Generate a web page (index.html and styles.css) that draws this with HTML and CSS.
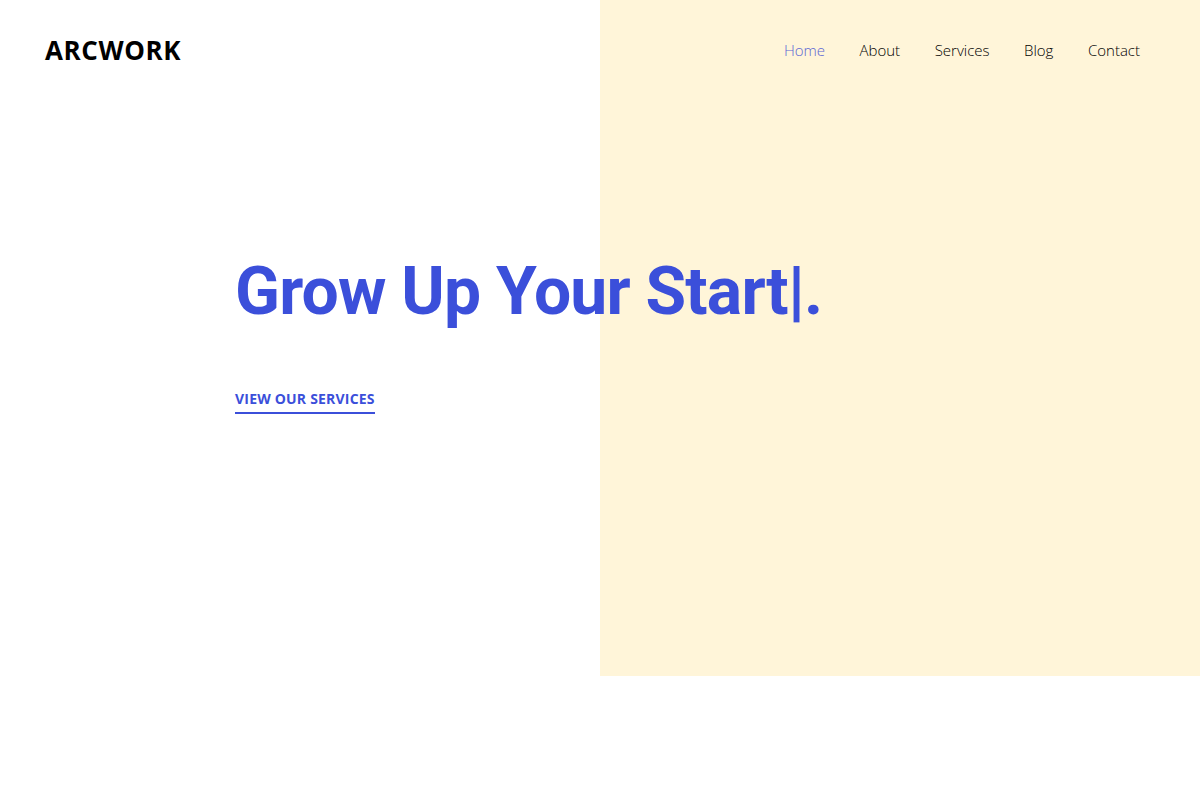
FILE: index.html
```html
<!DOCTYPE html>
<html lang="en">
<head>
<meta charset="utf-8">
<title>Arcwork</title>
<link rel="stylesheet" href="styles.css">
</head>
<body>
<div class="page">
  <header class="header">
    <div class="logo">ARCWORK</div>
    <nav class="nav">
      <a class="nav-link active" href="#">Home</a>
      <a class="nav-link" href="#">About</a>
      <a class="nav-link" href="#">Services</a>
      <a class="nav-link" href="#">Blog</a>
      <a class="nav-link" href="#">Contact</a>
    </nav>
  </header>
  <section class="hero">
    <h1 class="title">Grow Up Your Start<span class="cursor">|</span>.</h1>
    <a class="cta" href="#">VIEW OUR SERVICES</a>
  </section>
</div>
</body>
</html>
```

FILE: styles.css
```css
html, body {
  margin: 0;
  padding: 0;
  background: #ffffff;
}
.page {
  height: 676px;
  background: linear-gradient(to right, #ffffff 0, #ffffff 600px, #fff5d9 600px, #fff5d9 100%);
  display: flex;
  flex-direction: column;
}
.header {
  display: flex;
  justify-content: space-between;
  align-items: center;
  padding: 33px 60px 0 45px;
  height: 34px;
}
.logo {
  font-family: "Open Sans", "Liberation Sans", sans-serif;
  font-weight: 700;
  font-size: 26px;
  color: #000;
  letter-spacing: 0.6px;
}
.nav {
  display: flex;
  gap: 34.5px;
}
.nav-link {
  font-family: "Open Sans", "Noto Sans", sans-serif;
  font-weight: 300;
  font-size: 15px;
  color: #000;
  text-decoration: none;
}
.nav-link.active {
  color: #5a64d4;
}
.hero {
  padding: 185px 0 0 235px;
  display: flex;
  flex-direction: column;
  align-items: flex-start;
}
.title {
  margin: 0;
  font-family: Roboto, "Liberation Sans", sans-serif;
  font-weight: 700;
  font-size: 66px;
  line-height: 80px;
  color: #3b4fda;
  letter-spacing: -0.8px;
}
.cursor {
  font-weight: 900;
}
.cta {
  margin-top: 57px;
  font-family: "Open Sans", "Liberation Sans", sans-serif;
  font-weight: 700;
  font-size: 14px;
  color: #3b4fda;
  text-decoration: none;
  padding-bottom: 4px;
  border-bottom: 2px solid #3b4fda;
  letter-spacing: 0.2px;
}
```
